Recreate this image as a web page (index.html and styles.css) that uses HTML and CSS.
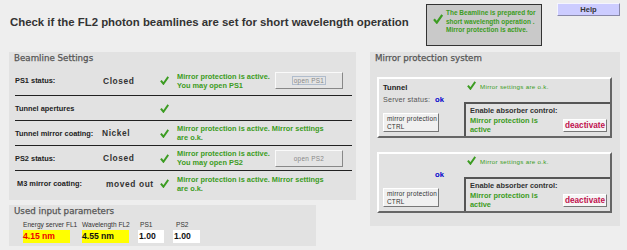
FILE: index.html
```html
<html>
    <head>
        <link rel="stylesheet" href="styles.css">
    </head>
    <body>

    <div class="top">
        <h1 class="title">Check if the FL2 photon beamlines are set for short wavelength operation</h1>
        <div class="summary">
            <svg class="tick big" viewBox="0 0 10 10"><path d="M1 5.2 L3.8 8.6 L9.2 1"/></svg>
            <p>The Beamline is prepared for<br>short wavelength operation .<br>Mirror protection is active.</p>
        </div>
        <button class="help">Help</button>
    </div>

    <div class="main">
        <div class="left-col">
            <div class="panel settings">
                <h2>Beamline Settings</h2>
                <div class="rows">
                    <div class="row r1">
                        <span class="label">PS1 status:</span>
                        <span class="value">Closed</span>
                        <svg class="tick" viewBox="0 0 10 10"><path d="M1 5.2 L3.8 8.6 L9.2 1"/></svg>
                        <span class="msg">Mirror protection is active.<br>You may open PS1</span>
                        <button class="open-btn"><span class="focus">open PS1</span></button>
                    </div>
                    <div class="row r2">
                        <span class="label">Tunnel apertures</span>
                        <span class="value"></span>
                        <svg class="tick" viewBox="0 0 10 10"><path d="M1 5.2 L3.8 8.6 L9.2 1"/></svg>
                    </div>
                    <div class="row r3">
                        <span class="label">Tunnel mirror coating:</span>
                        <span class="value">Nickel</span>
                        <svg class="tick" viewBox="0 0 10 10"><path d="M1 5.2 L3.8 8.6 L9.2 1"/></svg>
                        <span class="msg wide">Mirror protection is active. Mirror settings<br>are o.k.</span>
                    </div>
                    <div class="row r4">
                        <span class="label">PS2 status:</span>
                        <span class="value">Closed</span>
                        <svg class="tick" viewBox="0 0 10 10"><path d="M1 5.2 L3.8 8.6 L9.2 1"/></svg>
                        <span class="msg">Mirror protection is active.<br>You may open PS2</span>
                        <button class="open-btn">open PS2</button>
                    </div>
                    <div class="row r5">
                        <span class="label">M3 mirror coating:</span>
                        <span class="value">moved out</span>
                        <svg class="tick" viewBox="0 0 10 10"><path d="M1 5.2 L3.8 8.6 L9.2 1"/></svg>
                        <span class="msg wide">Mirror protection is active. Mirror settings<br>are o.k.</span>
                    </div>
                </div>
            </div>

            <div class="panel params">
                <h2>Used input parameters</h2>
                <div class="fields">
                    <div class="field f1">
                        <label>Energy server FL1</label>
                        <div class="box yellow red">4.15 nm</div>
                    </div>
                    <div class="field f2">
                        <label>Wavelength FL2</label>
                        <div class="box yellow">4.55 nm</div>
                    </div>
                    <div class="field f3">
                        <label>PS1</label>
                        <div class="box white">1.00</div>
                    </div>
                    <div class="field f4">
                        <label>PS2</label>
                        <div class="box white">1.00</div>
                    </div>
                </div>
            </div>
        </div>

        <div class="panel mirror">
            <h2>Mirror protection system</h2>

            <div class="mp-box">
                <div class="mp-left">
                    <div class="mp-name">Tunnel</div>
                    <div class="mp-status"><span class="status-label">Server status:</span><span class="ok">ok</span></div>
                    <button class="ctrl-btn">mirror protection<br>CTRL</button>
                </div>
                <div class="mp-right">
                    <div class="mp-check">
                        <svg class="tick" viewBox="0 0 10 10"><path d="M1 5.2 L3.8 8.6 L9.2 1"/></svg>
                        <span>Mirror settings are o.k.</span>
                    </div>
                    <div class="absorber">
                        <div class="abs-title">Enable absorber control:</div>
                        <div class="abs-row">
                            <span class="abs-msg">Mirror protection is<br>active</span>
                            <button class="deact-btn">deactivate</button>
                        </div>
                    </div>
                </div>
            </div>

            <div class="mp-box">
                <div class="mp-left">
                    <div class="mp-name"></div>
                    <div class="mp-status"><span class="status-label"></span><span class="ok">ok</span></div>
                    <button class="ctrl-btn">mirror protection<br>CTRL</button>
                </div>
                <div class="mp-right">
                    <div class="mp-check">
                        <svg class="tick" viewBox="0 0 10 10"><path d="M1 5.2 L3.8 8.6 L9.2 1"/></svg>
                        <span>Mirror settings are o.k.</span>
                    </div>
                    <div class="absorber">
                        <div class="abs-title">Enable absorber control:</div>
                        <div class="abs-row">
                            <span class="abs-msg">Mirror protection is<br>active</span>
                            <button class="deact-btn">deactivate</button>
                        </div>
                    </div>
                </div>
            </div>
        </div>
    </div>

    </body>
</html>
```

FILE: styles.css
```css
body {
    margin: 0;
    background-color: #eeeeee;
    font-family: "Liberation Sans", Arial, sans-serif;
    color: #222;
}

button {
    font-family: "Liberation Sans", Arial, sans-serif;
    padding: 0;
    cursor: pointer;
}

.tick {
    width: 9px;
    height: 9px;
    fill: none;
    stroke: #3c9c22;
    stroke-width: 2.2;
}

/* top bar */
.top {
    display: flex;
    align-items: flex-start;
    height: 52px;
}
.title {
    margin: 16px 0 0 10px;
    width: 416px;
    font-size: 11.4px;
    line-height: 13px;
    font-weight: bold;
    color: #333;
}
.summary {
    display: flex;
    margin-top: 4px;
    width: 114px;
    height: 40px;
    border: 1px solid #333;
    background-color: #c9c9c9;
}
.summary .tick {
    margin: 9px 0 0 6px;
    width: 10px;
    height: 10px;
}
.summary p {
    margin: 4px 0 0 3px;
    font-size: 6.5px;
    line-height: 8.5px;
    font-weight: bold;
    color: #3c9c22;
    white-space: nowrap;
}
.help {
    margin: 3px 0 0 15px;
    width: 63px;
    height: 13px;
    background-color: #ccccff;
    border: 1px solid;
    border-color: #f4f4ff #8888a8 #8888a8 #f4f4ff;
    font-size: 7.5px;
    font-weight: bold;
    color: #333;
}

/* main layout */
.main {
    display: flex;
    gap: 14px;
    padding-left: 9px;
}
.left-col {
    display: flex;
    flex-direction: column;
    gap: 5px;
}
.panel {
    background-color: #e2e2e2;
}
.panel h2 {
    margin: 0;
    padding: 1px 0 0 5px;
    height: 13px;
    font-family: "DejaVu Sans", Verdana, sans-serif;
    font-size: 8.7px;
    line-height: 11px;
    font-weight: normal;
    color: #555;
    -webkit-text-stroke: 0.25px #555;
}

/* beamline settings */
.settings {
    width: 347px;
    height: 148px;
}
.rows {
    margin: 0 4px 0 6px;
}
.row {
    display: grid;
    grid-template-columns: 88px 54px 20px 98px 68px;
    align-items: center;
    border-bottom: 1px solid #222;
}
.row .tick {
    margin-left: 3px;
}
.r1 { height: 29px; }
.r2 { height: 24px; }
.r3 { height: 24px; }
.r4 { height: 24px; }
.r5 { height: 25px; border-bottom: none; }

.label {
    font-size: 7.4px;
    font-weight: bold;
    color: #222;
    white-space: nowrap;
}
.r5 .label {
    padding-left: 2px;
}
.value {
    font-size: 8.4px;
    font-weight: bold;
    letter-spacing: 0.6px;
    color: #333;
    white-space: nowrap;
}
.r3 .value {
    margin-left: -1px;
}
.r5 .value {
    margin-left: 3px;
}
.msg {
    font-size: 7.4px;
    line-height: 9px;
    font-weight: bold;
    color: #3c9c22;
    white-space: nowrap;
}
.msg.wide {
    grid-column: 4 / span 2;
}
.open-btn {
    width: 68px;
    height: 17px;
    background-color: #e4e4e4;
    border: 1px solid;
    border-color: #fafafa #888 #888 #fafafa;
    font-size: 6.4px;
    color: #888;
    letter-spacing: 0.3px;
}
.open-btn .focus {
    padding: 0 1px;
    border: 1px solid #b0bccc;
}

/* used input parameters */
.params {
    width: 307px;
    height: 41px;
}
.fields {
    display: grid;
    grid-template-columns: 59px 56px 35px 30px;
    padding-left: 14px;
}
.field label {
    display: block;
    height: 11px;
    font-size: 6.6px;
    line-height: 11px;
    color: #333;
    white-space: nowrap;
}
.f3 label { padding-left: 2px; }
.f4 label { padding-left: 3px; }
.box {
    height: 13px;
    font-size: 8.6px;
    font-weight: bold;
    line-height: 13px;
    color: #111;
}
.box.yellow {
    width: 47px;
    background-color: #ffff00;
}
.box.red {
    color: #ee0000;
}
.box.white {
    width: 25px;
    padding-left: 1px;
    background-color: #ffffff;
}
.f4 .box.white {
    width: 26px;
}

/* mirror protection system */
.mirror {
    width: 250px;
    height: 174px;
}
.mirror h2 {
    height: 24px;
}
.mp-box {
    display: flex;
    margin: 0 0 14px 7px;
    width: 231px;
    height: 57px;
    border: 2px solid;
    border-color: #ffffff #666 #666 #ffffff;
}
.mp-left {
    display: flex;
    flex-direction: column;
    width: 85px;
    padding-left: 4px;
    box-sizing: border-box;
}
.mp-name {
    height: 9px;
    margin-top: 4px;
    font-size: 7.6px;
    font-weight: bold;
    color: #222;
}
.mp-status {
    height: 11px;
    margin-top: 2px;
    font-size: 7.2px;
    line-height: 11px;
    white-space: nowrap;
}
.status-label {
    display: inline-block;
    width: 52px;
    color: #555;
    letter-spacing: 0.2px;
}
.ok {
    font-size: 7.6px;
    font-weight: bold;
    color: #0000cc;
}
.ctrl-btn {
    margin-top: 8px;
    width: 56px;
    height: 19px;
    padding-left: 3px;
    text-align: left;
    background-color: #f0f0f0;
    border: 1px solid;
    border-color: #ffffff #777 #777 #ffffff;
    font-size: 6.4px;
    line-height: 7.5px;
    color: #333;
    letter-spacing: 0.2px;
}
.mp-right {
    display: flex;
    flex-direction: column;
    flex: 1;
}
.mp-check {
    display: flex;
    align-items: flex-start;
    height: 23px;
    box-sizing: border-box;
    padding: 2px 0 0 3px;
}
.mp-check span {
    margin: 2px 0 0 4px;
    font-size: 6.2px;
    color: #3c9c22;
    letter-spacing: 0.3px;
    white-space: nowrap;
}
.absorber {
    flex: 1;
    border-top: 2px solid #555;
    border-left: 2px solid #555;
    padding: 2px 0 0 4px;
}
.abs-title {
    font-size: 7.4px;
    line-height: 10px;
    font-weight: bold;
    color: #333;
    white-space: nowrap;
}
.abs-row {
    display: flex;
    align-items: center;
}
.abs-msg {
    width: 93px;
    font-size: 7.4px;
    line-height: 9px;
    font-weight: bold;
    color: #3c9c22;
}
.deact-btn {
    width: 44px;
    height: 13px;
    background-color: #f6f6f6;
    border: 1px solid;
    border-color: #ffffff #777 #777 #ffffff;
    font-size: 8.2px;
    font-weight: bold;
    color: #c0104c;
}
```
